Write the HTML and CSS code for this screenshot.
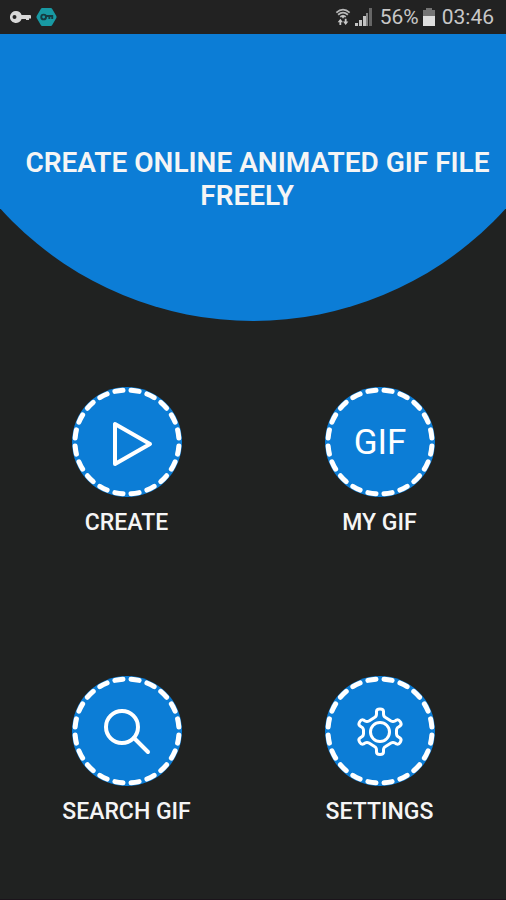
FILE: index.html
```html
<!DOCTYPE html>
<html lang="en">
<head>
<meta charset="utf-8">
<meta name="viewport" content="width=device-width, initial-scale=1">
<title>GIF Maker</title>
<link rel="stylesheet" href="styles.css">
</head>
<body>
<div class="status">
  <div class="status-group">
    <svg class="key" viewBox="0 0 22 14" aria-hidden="true"><path fill="#d8d8d8" fill-rule="evenodd" d="M6 1a6 6 0 0 1 5.600 4H20q1 0 1 1v2.500h-2V10h-3V9h-4.400A6 6 0 1 1 6 1ZM4.500 5a2 2 0 1 0 0 4 2 2 0 0 0 0-4Z"/></svg>
    <svg class="vpn" viewBox="0 0 22 20" aria-hidden="true"><path fill="#1899a3" d="M6.500.5h9q1 0 1.500 1l4.300 7.500q.5 1 0 2L17 18.500q-.5 1-1.500 1h-9q-1 0-1.500-1L.7 11q-.5-1 0-2L5 1.500q.5-1 1.500-1Z"/><circle cx="8" cy="10" r="2.500" fill="none" stroke="#153c42" stroke-width="2"/><path fill="none" stroke="#153c42" stroke-width="2" d="M10.500 9H17v3M14 9v3"/></svg>
  </div>
  <div class="status-group">
    <svg class="wifi" viewBox="0 0 18 20" aria-hidden="true"><g fill="none" stroke="#b8b8b8" stroke-width="2"><path d="M1.500 5Q9-1.500 16.500 5M3.500 7.500Q9 2.500 14.500 7.500M6 10Q9 7 12 10"/></g><path fill="#c8c8c8" d="M7 9h4l-2 3ZM6 12l3 4H7v3H5v-3H3ZM12 19l-3-4h2v-3h2v3h2Z"/></svg>
    <svg class="signal" viewBox="0 0 17 18" aria-hidden="true"><path fill="#c4c4c4" d="M0 15h3v3H0ZM4 12h3v6H4ZM8 8h3v10H8Z"/><path fill="#858585" d="M11 5h2v13h-2Z"/><path fill="#666" d="M14 0h3v18h-3Z"/></svg>
    <span class="percent">56%</span>
    <svg class="battery" viewBox="0 0 12 18" aria-hidden="true"><path fill="#747474" d="M3 0h6v2h3v6H0V2h3Z"/><path fill="#dedede" d="M0 8h12v10H0Z"/></svg>
    <time>03:46</time>
  </div>
</div>
<header class="hero">
  <h1>CREATE ONLINE ANIMATED GIF FILE<br>FREELY&nbsp;&nbsp;&nbsp;</h1>
</header>
<main class="menu">
  <button class="item" type="button">
    <svg class="badge" viewBox="0 0 110 110" aria-hidden="true">
      <circle class="disc" cx="55" cy="55" r="55"/><circle class="ring" cx="55" cy="55" r="52" pathLength="320"/>
      <path class="line" d="M43 37v40l35-20Z"/>
    </svg>
    <span>CREATE</span>
  </button>
  <button class="item" type="button">
    <svg class="badge" viewBox="0 0 110 110" aria-hidden="true">
      <circle class="disc" cx="55" cy="55" r="55"/><circle class="ring" cx="55" cy="55" r="52" pathLength="320"/>
      <text class="gif" x="55" y="67">GIF</text>
    </svg>
    <span>MY GIF</span>
  </button>
  <button class="item" type="button">
    <svg class="badge" viewBox="0 0 110 110" aria-hidden="true">
      <circle class="disc" cx="55" cy="55" r="55"/><circle class="ring" cx="55" cy="55" r="52" pathLength="320"/>
      <g class="line"><circle cx="50" cy="51" r="16"/><path d="m62 62 14 14"/></g>
    </svg>
    <span>SEARCH GIF</span>
  </button>
  <button class="item" type="button">
    <svg class="badge" viewBox="0 0 110 110" aria-hidden="true">
      <circle class="disc" cx="55" cy="55" r="55"/><circle class="ring" cx="55" cy="55" r="52" pathLength="320"/>
      <g class="line thin"><circle cx="55" cy="56" r="9.500"/>
      <path d="M51.500 35.500q0-2.500 3.500-2.500t3.500 2.500v2.500q0 2.500 2 3.500l5.500 3.500q2 1 4 0l1.500-1q2-1 3.800 1.800t-.3 4.200l-1.500 1q-2 1-2 3.500v3q0 2.500 2 3.500l1.500 1q2 1.400.3 4.200T71.500 68l-1.500-1q-2-1-4 0l-5.500 3.500q-2 1-2 3.500v2q0 2.500-3.500 2.500T51.500 76v-2q0-2.500-2-3.500L44 67q-2-1-4 0l-1.500 1q-2 1-3.800-1.800t.3-4.200l1.500-1q2-1 2-3.500v-3q0-2.500-2-3.500l-1.500-1q-2-1.400-.3-4.200t3.800-1.800l1.500 1q2 1 4 0l5.500-3.500q2-1 2-3.500Z"/></g>
    </svg>
    <span>SETTINGS</span>
  </button>
</main>
</body>
</html>
```
FILE: styles.css
```css
* {
  box-sizing: border-box;
}

body {
  margin: 0;
  min-height: 100vh;
  display: flex;
  flex-direction: column;
  background: #202221;
  border-bottom: 1px solid #1b141b;
  color: #f5f5f5;
  font-family: Roboto, "Liberation Sans", sans-serif;
}

.status {
  display: flex;
  justify-content: space-between;
  align-items: center;
  height: 34px;
  padding: 0 12px 0 10px;
  background: #222;
  color: #c8c8c8;
  font-size: 21px;
}

.status-group {
  display: flex;
  align-items: center;
  gap: 4px;
}

.key {
  width: 22px;
  height: 14px;
}

.vpn {
  width: 21px;
  height: 20px;
}

.wifi {
  width: 16px;
  height: 18px;
}

.signal {
  width: 17px;
  height: 18px;
  margin-right: 4px;
}

.battery {
  width: 12px;
  height: 18px;
  margin-right: 3px;
}

.hero {
  height: 287px;
  padding: 112px 8px 0 17px;
  background: #0c7dd6;
  clip-path: ellipse(67.2% 340px at 50% -53px);
  text-align: center;
}

h1 {
  margin: 0;
  font-size: 28px;
  font-weight: 600;
  line-height: 33px;
  white-space: nowrap;
}

.menu {
  flex: 1;
  display: grid;
  grid-template-columns: 1fr 1fr;
  align-content: start;
  row-gap: 139px;
  padding: 66px 0 40px;
}

.item {
  display: flex;
  flex-direction: column;
  align-items: center;
  gap: 12px;
  padding: 0;
  border: 0;
  background: none;
  color: inherit;
  font: 500 23px/28px Roboto, "Liberation Sans", sans-serif;
  cursor: pointer;
}

.badge {
  width: 110px;
  height: 110px;
}

.disc {
  fill: #0c7dd6;
}

.ring {
  fill: none;
  stroke: #fff;
  stroke-width: 5;
  stroke-linecap: round;
  stroke-dasharray: 8 8;
  stroke-dashoffset: -4;
}

.line {
  fill: none;
  stroke: #fff;
  stroke-width: 4;
  stroke-linecap: round;
  stroke-linejoin: round;
}

.thin {
  stroke-width: 3;
}

.gif {
  fill: #fff;
  font-size: 35px;
  font-weight: 400;
  text-anchor: middle;
}
```
